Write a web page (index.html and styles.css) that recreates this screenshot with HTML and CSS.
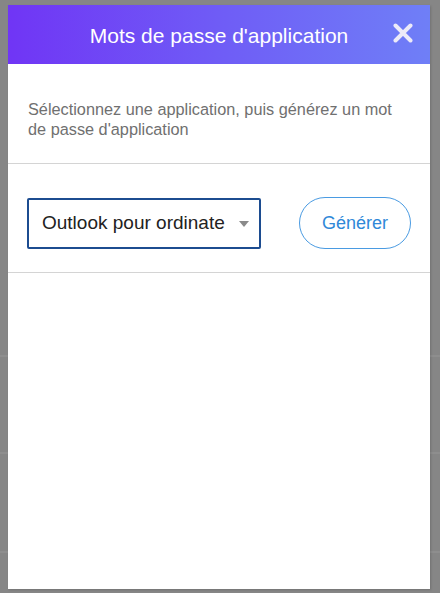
FILE: index.html
```html
<!DOCTYPE html>
<html lang="fr">
<head>
<meta charset="utf-8">
<title>Mots de passe d'application</title>
<link rel="stylesheet" href="styles.css">
</head>
<body>
<div class="modal">
  <div class="modal-header">
    <h1 class="modal-title">Mots de passe d'application</h1>
    <button class="close-btn" aria-label="Fermer">
      <svg width="20" height="20" viewBox="0 0 20 20"><path d="M2.5 2.5 L17.5 17.5 M17.5 2.5 L2.5 17.5" stroke="#eceaf8" stroke-width="4" stroke-linecap="round"/></svg>
    </button>
  </div>
  <div class="modal-body">
    <p class="description">Sélectionnez une application, puis générez un mot de passe d'application</p>
    <div class="divider"></div>
    <div class="actions">
      <div class="select">
        <span class="select-text">Outlook pour ordinate</span>
        <span class="select-arrow"></span>
      </div>
      <button class="generate-btn">Générer</button>
    </div>
    <div class="divider"></div>
  </div>
</div>
</body>
</html>
```
FILE: styles.css
```css
html, body {
  margin: 0;
  padding: 0;
}
body {
  width: 440px;
  height: 593px;
  overflow: hidden;
  background-color: #868686;
  background-image:
    linear-gradient(#8e8e8e, #8e8e8e),
    linear-gradient(#8e8e8e, #8e8e8e),
    linear-gradient(#8e8e8e, #8e8e8e);
  background-size: 100% 2px;
  background-repeat: no-repeat;
  background-position: 0 355px, 0 452px, 0 551px;
  font-family: "Liberation Sans", Arial, sans-serif;
  padding-top: 5px;
  box-sizing: border-box;
}
.modal {
  margin-left: 8px;
  width: 422px;
  height: 584px;
  background: #ffffff;
  display: flex;
  flex-direction: column;
  box-shadow: 1px 1px 2px rgba(0,0,0,0.15);
}
.modal-header {
  height: 59px;
  background: linear-gradient(to right, #7035f5 0%, #6f5cf6 50%, #6f7ff7 100%);
  display: flex;
  align-items: center;
  justify-content: center;
  position: relative;
}
.modal-title {
  margin: 3px 0 0 0;
  font-weight: normal;
  font-size: 21px;
  color: #ffffff;
}
.close-btn {
  position: absolute;
  right: 17px;
  top: 18px;
  width: 20px;
  height: 20px;
  padding: 0;
  border: 0;
  background: none;
  display: flex;
}
.modal-body {
  display: flex;
  flex-direction: column;
}
.description {
  margin: 0;
  padding: 35px 30px 24px 20px;
  font-size: 16.3px;
  line-height: 20px;
  color: #707070;
}
.divider {
  height: 1px;
  background: #d4d4d4;
}
.actions {
  display: flex;
  align-items: center;
  justify-content: space-between;
  padding: 33px 19px 23px 19px;
}
.select {
  width: 234px;
  height: 51px;
  box-sizing: border-box;
  border: 2px solid #1c4c90;
  border-radius: 2px;
  display: flex;
  align-items: center;
  justify-content: space-between;
  padding: 0 10px 0 13px;
}
.select-text {
  font-size: 19px;
  color: #222222;
}
.select-arrow {
  width: 0;
  height: 0;
  border-left: 5.5px solid transparent;
  border-right: 5.5px solid transparent;
  border-top: 6px solid #8a8a8a;
  margin-top: 1px;
}
.generate-btn {
  width: 112px;
  height: 52px;
  box-sizing: border-box;
  border: 1.5px solid #4a9be2;
  border-radius: 26px;
  background: #ffffff;
  color: #2f88d8;
  font-family: "Liberation Sans", Arial, sans-serif;
  font-size: 18px;
  padding: 0;
}
```
